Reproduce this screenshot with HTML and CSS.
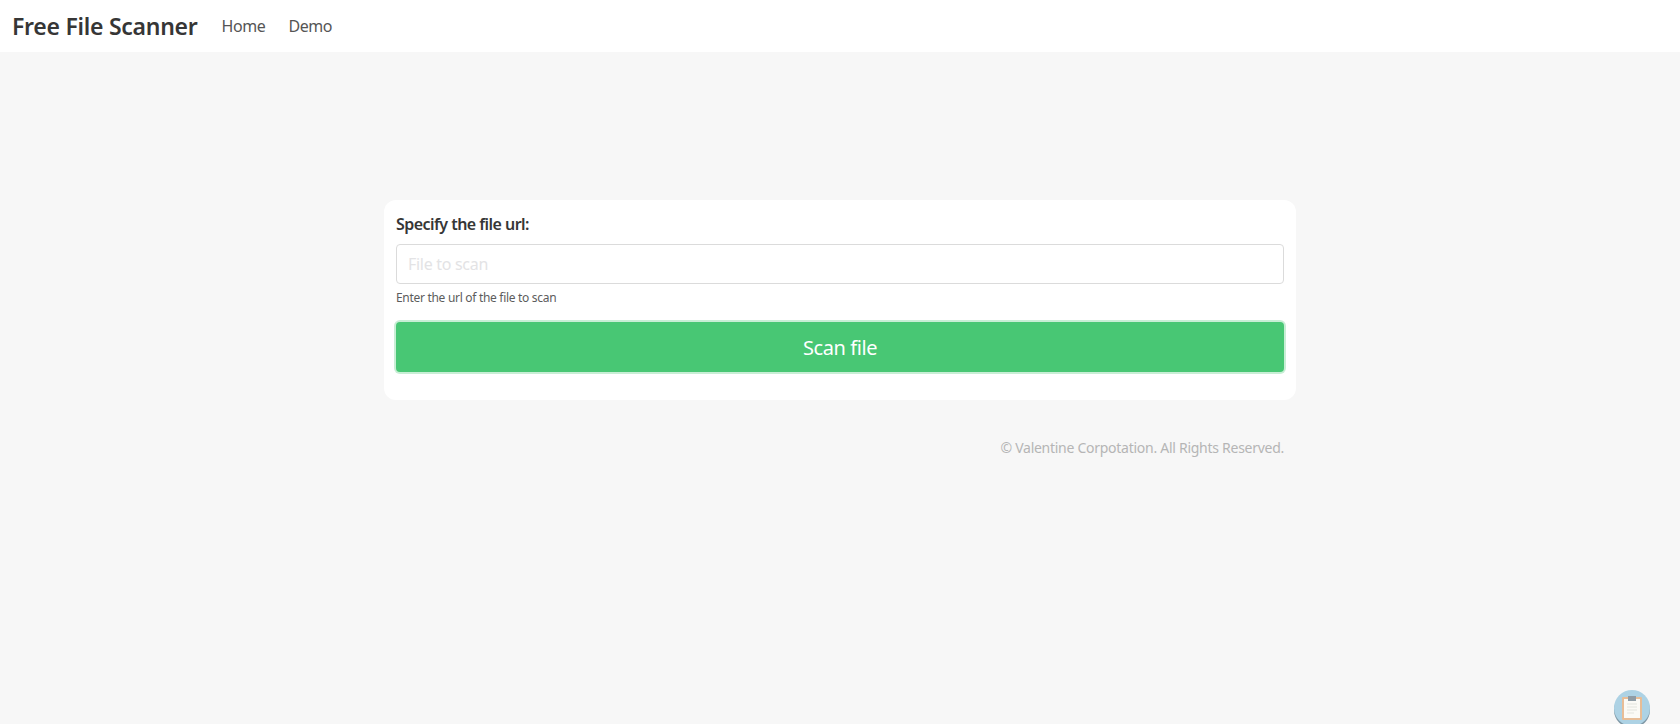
FILE: index.html
```html
<!DOCTYPE html>
<html lang="en">
<head>
<meta charset="utf-8">
<title>Free File Scanner</title>
<link rel="stylesheet" href="styles.css">
</head>
<body>
<nav class="navbar">
  <a class="brand" href="#">Free File Scanner</a>
  <a class="nav-item" href="#">Home</a>
  <a class="nav-item" href="#">Demo</a>
</nav>
<main class="main">
  <form class="box">
    <label class="label" for="file">Specify the file url:</label>
    <input class="input" id="file" type="text" placeholder="File to scan">
    <p class="help">Enter the url of the file to scan</p>
    <button class="button" type="button">Scan file</button>
  </form>
  <p class="copy">© Valentine Corpotation. All Rights Reserved.</p>
</main>
<div class="notes" aria-hidden="true">
  <svg viewBox="0 0 36 38" width="36" height="38">
    <circle cx="18" cy="20" r="18" fill="#7f98a6"/>
    <circle cx="18" cy="18" r="18" fill="#add2e4"/>
    <rect x="8" y="7" width="20" height="23" rx="1" fill="#e8bd96"/>
    <rect x="10" y="9" width="16" height="19" fill="#fbfaf5"/>
    <rect x="14" y="6" width="8" height="5" fill="#8f9ca5"/>
    <path d="M13 14h10M13 17h10M13 20h10M13 23h7" stroke="#e4e4de" stroke-width="1.2" fill="none"/>
  </svg>
</div>
</body>
</html>
```
FILE: styles.css
```css
* { box-sizing: border-box; }
html, body { margin: 0; height: 100%; }
body {
  background: #f7f7f7;
  font-family: "Noto Sans", sans-serif;
  font-size: 16px;
  color: #4a4a4a;
  overflow: hidden;
}
a { text-decoration: none; color: inherit; }
.navbar {
  display: flex;
  align-items: center;
  height: 52px;
  background: #fff;
  padding-left: 12px;
  gap: 24px;
}
.brand { font-size: 23px; font-weight: 600; color: #363636; letter-spacing: -0.27px; }
.nav-item { font-size: 16px; color: #555; letter-spacing: -0.4px; }
.nav-item + .nav-item { margin-left: -1px; }
.main { width: 912px; margin: 148px auto 0; }
.box {
  display: flex;
  flex-direction: column;
  background: #fff;
  border-radius: 12px;
  height: 200px;
  padding: 12px;
}
.label { font-weight: 600; font-size: 16px; letter-spacing: -0.55px; color: #363636; line-height: 24px; margin-bottom: 8px; }
.input {
  height: 40px;
  border: 1px solid #dbdbdb;
  border-radius: 4px;
  padding: 0 11px;
  font: 16px "Noto Sans", sans-serif;
  letter-spacing: -0.3px;
}
.input::placeholder { color: #e3e3e5; opacity: 1; }
.help { margin: 5px 0 0; font-size: 12px; line-height: 18px; letter-spacing: -0.3px; color: #5c5c5c; }
.button {
  margin-top: 15px;
  height: 50px;
  border: 0;
  border-radius: 4px;
  background: #48c774;
  color: #fff;
  font: 20px "Noto Sans", sans-serif;
  letter-spacing: -0.4px;
  box-shadow: 0 0 0 2px rgba(72, 199, 116, .3);
  cursor: pointer;
}
.copy { margin: 37px 12px 0 0; text-align: right; font-size: 14px; line-height: 21px; letter-spacing: -0.27px; color: #b5b5b5; }
.notes { position: fixed; right: 30px; bottom: -4px; width: 36px; height: 38px; }
```
